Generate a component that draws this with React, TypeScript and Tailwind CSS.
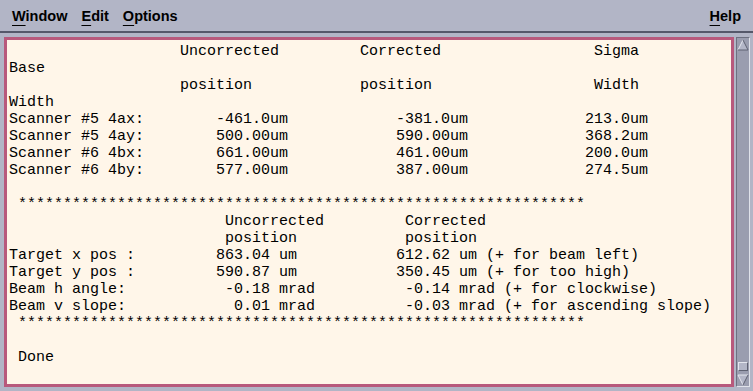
import React from "react";

const STARS = "*".repeat(63);

function row(parts: [number, string][]): string {
  let s = "";
  for (const [col, text] of parts) {
    if (s.length < col) s = s + " ".repeat(col - s.length);
    s += text;
  }
  return s;
}

const lines: string[] = [
  row([[19, "Uncorrected"], [39, "Corrected"], [65, "Sigma"]]),
  "Base",
  row([[19, "position"], [39, "position"], [65, "Width"]]),
  "Width",
  row([[0, "Scanner #5 4ax:"], [23, "-461.0um"], [43, "-381.0um"], [64, "213.0um"]]),
  row([[0, "Scanner #5 4ay:"], [23, "500.00um"], [43, "590.00um"], [64, "368.2um"]]),
  row([[0, "Scanner #6 4bx:"], [23, "661.00um"], [43, "461.00um"], [64, "200.0um"]]),
  row([[0, "Scanner #6 4by:"], [23, "577.00um"], [43, "387.00um"], [64, "274.5um"]]),
  "",
  " " + STARS,
  row([[24, "Uncorrected"], [44, "Corrected"]]),
  row([[24, "position"], [44, "position"]]),
  row([[0, "Target x pos :"], [23, "863.04 um"], [43, "612.62 um (+ for beam left)"]]),
  row([[0, "Target y pos :"], [23, "590.87 um"], [43, "350.45 um (+ for too high)"]]),
  row([[0, "Beam h angle:"], [24, "-0.18 mrad"], [44, "-0.14 mrad (+ for clockwise)"]]),
  row([[0, "Beam v slope:"], [25, "0.01 mrad"], [44, "-0.03 mrad (+ for ascending slope)"]]),
  " " + STARS,
  "",
  " Done",
];

function MenuItem({ first, rest }: { first: string; rest: string }) {
  return (
    <span>
      <span className="underline decoration-1 underline-offset-[4px]">{first}</span>
      {rest}
    </span>
  );
}

function Arrow({ up }: { up: boolean }) {
  return (
    <svg width="12" height="12" viewBox="0 0 12 12" className="block">
      {up ? (
        <>
          <polygon points="6,1 11,11 1,11" fill="#b3b6c7" />
          <line x1="6" y1="1" x2="1" y2="11" stroke="#e4e6ee" strokeWidth="1" />
          <line x1="6" y1="1" x2="11" y2="11" stroke="#5f6272" strokeWidth="1" />
          <line x1="1" y1="11" x2="11" y2="11" stroke="#5f6272" strokeWidth="1" />
        </>
      ) : (
        <>
          <polygon points="1,1 11,1 6,11" fill="#b3b6c7" />
          <line x1="1" y1="1" x2="11" y2="1" stroke="#e4e6ee" strokeWidth="1" />
          <line x1="1" y1="1" x2="6" y2="11" stroke="#e4e6ee" strokeWidth="1" />
          <line x1="11" y1="1" x2="6" y2="11" stroke="#5f6272" strokeWidth="1" />
        </>
      )}
    </svg>
  );
}

export default function App() {
  return (
    <div className="w-[753px] h-[391px] bg-[#b2b5c6] flex flex-col overflow-hidden">
      <div
        className="h-[31px] flex items-center pt-[2px] pl-[12px] pr-[12px] text-[14.5px] font-bold text-black"
        style={{ fontFamily: '"Liberation Sans", Arial, sans-serif' }}
      >
        <div className="flex gap-[14px]">
          <MenuItem first="W" rest="indow" />
          <MenuItem first="E" rest="dit" />
          <MenuItem first="O" rest="ptions" />
        </div>
        <div className="flex-1" />
        <MenuItem first="H" rest="elp" />
      </div>
      <div className="h-[2px] bg-[#55586a]" />
      <div className="flex-1 flex pt-[4px] pl-[4px] pr-[3px] pb-[4px] gap-[2px] min-h-0">
        <div className="flex-1 border-[3px] border-[#b8597c] bg-[#fff6e9] pl-[2px] pt-[3px] overflow-hidden">
          <pre
            className="text-[15px] leading-[17px] text-black m-0"
            style={{ fontFamily: '"Liberation Mono", "DejaVu Sans Mono", monospace' }}
          >
            {lines.join("\n")}
          </pre>
        </div>
        <div className="w-[14px] flex flex-col bg-[#9a9daf] border border-t-[#6d7080] border-l-[#6d7080] border-b-[#e0e2ea] border-r-[#e0e2ea]">
          <div className="h-[13px] flex items-center justify-center">
            <Arrow up />
          </div>
          <div className="flex-1" />
          <div className="h-[9px] mx-[1px] mb-[2px] bg-[#b3b6c7] border border-t-[#e4e6ee] border-l-[#e4e6ee] border-b-[#5f6272] border-r-[#5f6272]" />
          <div className="h-[13px] flex items-center justify-center">
            <Arrow up={false} />
          </div>
        </div>
      </div>
    </div>
  );
}
